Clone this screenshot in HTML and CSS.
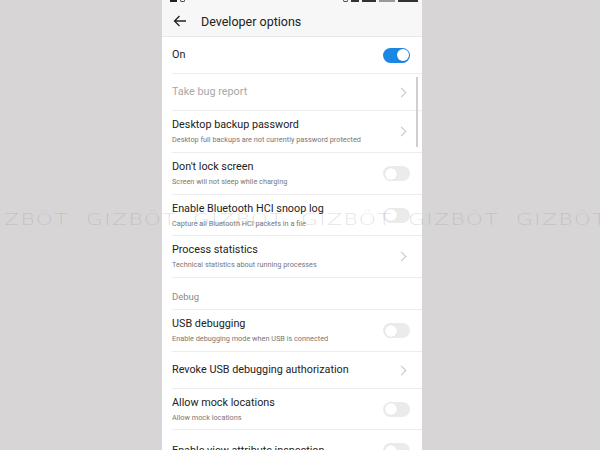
FILE: index.html
```html
<!DOCTYPE html>
<html>
<head>
<meta charset="utf-8">
<link rel="stylesheet" href="styles.css">
</head>
<body>
<div class="stage">
  <div class="phone">
    <div class="header">
      <div class="status">
        <div class="st-left"><span class="st-box"></span><span class="st-dot"></span></div>
        <div class="st-right"><span class="st-dot"></span><span class="st-bar w8"></span><span class="st-bar w14"></span><span class="st-bar w16 dim"></span><span class="st-bar w20"></span></div>
      </div>
      <div class="appbar">
        <svg class="back" width="14" height="12" viewBox="0 0 14 12"><path d="M13 6H1.5M6.5 1L1.5 6l5 5" fill="none" stroke="#222" stroke-width="1.3"/></svg>
        <span class="title">Developer options</span>
      </div>
    </div>
    <div class="list">
      <div class="row h37"><div class="text"><div class="t">On</div></div><span class="toggle on"></span></div>
      <div class="row h37"><div class="text"><div class="t dis">Take bug report</div></div><span class="chev"></span></div>
      <div class="row h42"><div class="text"><div class="t">Desktop backup password</div><div class="s">Desktop full backups are not currently password protected</div></div><span class="chev"></span></div>
      <div class="row h42"><div class="text"><div class="t">Don't lock screen</div><div class="s">Screen will not sleep while charging</div></div><span class="toggle"></span></div>
      <div class="row h41"><div class="text"><div class="t">Enable Bluetooth HCI snoop log</div><div class="s">Capture all Bluetooth HCI packets in a file</div></div><span class="toggle"></span></div>
      <div class="row h42"><div class="text"><div class="t">Process statistics</div><div class="s">Technical statistics about running processes</div></div><span class="chev"></span></div>
      <div class="section">Debug</div>
      <div class="row h42"><div class="text"><div class="t">USB debugging</div><div class="s">Enable debugging mode when USB is connected</div></div><span class="toggle"></span></div>
      <div class="row h37"><div class="text"><div class="t">Revoke USB debugging authorization</div></div><span class="chev"></span></div>
      <div class="row h41"><div class="text"><div class="t">Allow mock locations</div><div class="s">Allow mock locations</div></div><span class="toggle"></span></div>
      <div class="row h42"><div class="text"><div class="t">Enable view attribute inspection</div></div><span class="toggle"></span></div>
    </div>
    <div class="scrollbar"></div>
  </div>
  <div class="watermark"><span>GIZBÖT</span><span>GIZBÖT</span><span>GIZBÖT</span><span>GIZBÖT</span><span>GIZBÖT</span><span>GIZBÖT</span></div>
</div>
</body>
</html>
```
FILE: styles.css
```css
html, body { margin: 0; padding: 0; }
body { background: #d7d5d6; width: 600px; height: 450px; overflow: hidden; font-family: Roboto, "Liberation Sans", sans-serif; }
.stage { position: relative; width: 600px; height: 450px; display: flex; overflow: hidden; }
.phone { position: relative; margin-left: 162px; width: 260px; height: 450px; background: #fff; overflow: hidden; }
.header { background: #f7f7f7; height: 37px; border-bottom: 1px solid #e8e8e8; box-sizing: border-box; }
.status { height: 6px; display: flex; justify-content: space-between; padding: 0 4px 0 8px; overflow: hidden; }
.st-left, .st-right { display: flex; gap: 3px; align-items: flex-start; }
.st-box { width: 7px; height: 2px; background: #222; }
.st-dot { width: 5px; height: 2px; border: 1px solid #444; border-top: none; border-radius: 0 0 3px 3px; box-sizing: border-box; }
.st-bar { height: 2px; background: #333; }
.st-bar.dim { background: #999; }
.w8 { width: 8px; } .w14 { width: 14px; } .w16 { width: 16px; } .w20 { width: 20px; }
.appbar { height: 30px; display: flex; align-items: center; padding-left: 11px; }
.back { margin-right: 14px; }
.title { font-size: 12.5px; color: #222; }
.list { display: flex; flex-direction: column; }
.row { display: flex; align-items: center; margin-left: 10px; padding-right: 12px; border-bottom: 1px solid #ececec; box-sizing: border-box; }
.h37 { height: 37px; } .h41 { height: 41px; } .h42 { height: 42px; }
.text { flex: 1; }
.t { font-size: 10.8px; color: #222; line-height: 14px; }
.t.dis { color: #a8a8a8; }
.s { font-size: 7.3px; color: #777; margin-top: 3px; line-height: 10px; }
.section { height: 32px; box-sizing: border-box; padding-top: 6px; margin-left: 10px; font-size: 9.5px; color: #8a8a8a; display: flex; align-items: center; border-bottom: 1px solid #ececec; }
.toggle { width: 27px; height: 15px; border-radius: 8px; background: #ebebeb; position: relative; }
.toggle::after { content: ""; position: absolute; left: 1.5px; top: 1.5px; width: 12px; height: 12px; border-radius: 50%; background: #fff; box-shadow: 0 0 1px rgba(0,0,0,0.15); }
.toggle.on { background: #1a87e4; }
.toggle.on::after { left: 13.5px; }
.chev { width: 6px; height: 6px; border-top: 1px solid #c4c4c4; border-right: 1px solid #c4c4c4; transform: rotate(45deg); margin-right: 5px; }
.scrollbar { position: absolute; left: 254px; top: 77px; width: 2px; height: 70px; background: #cfcfcf; }
.watermark { position: absolute; left: -22px; top: 211px; display: flex; gap: 27.5px; font-family: "DejaVu Sans", sans-serif; font-weight: 200; font-size: 15px; letter-spacing: 1px; color: rgba(120,120,120,0.22); white-space: nowrap; pointer-events: none; }
.watermark span { display: inline-block; width: 80px; transform: scaleX(1.45); transform-origin: left center; }
```
